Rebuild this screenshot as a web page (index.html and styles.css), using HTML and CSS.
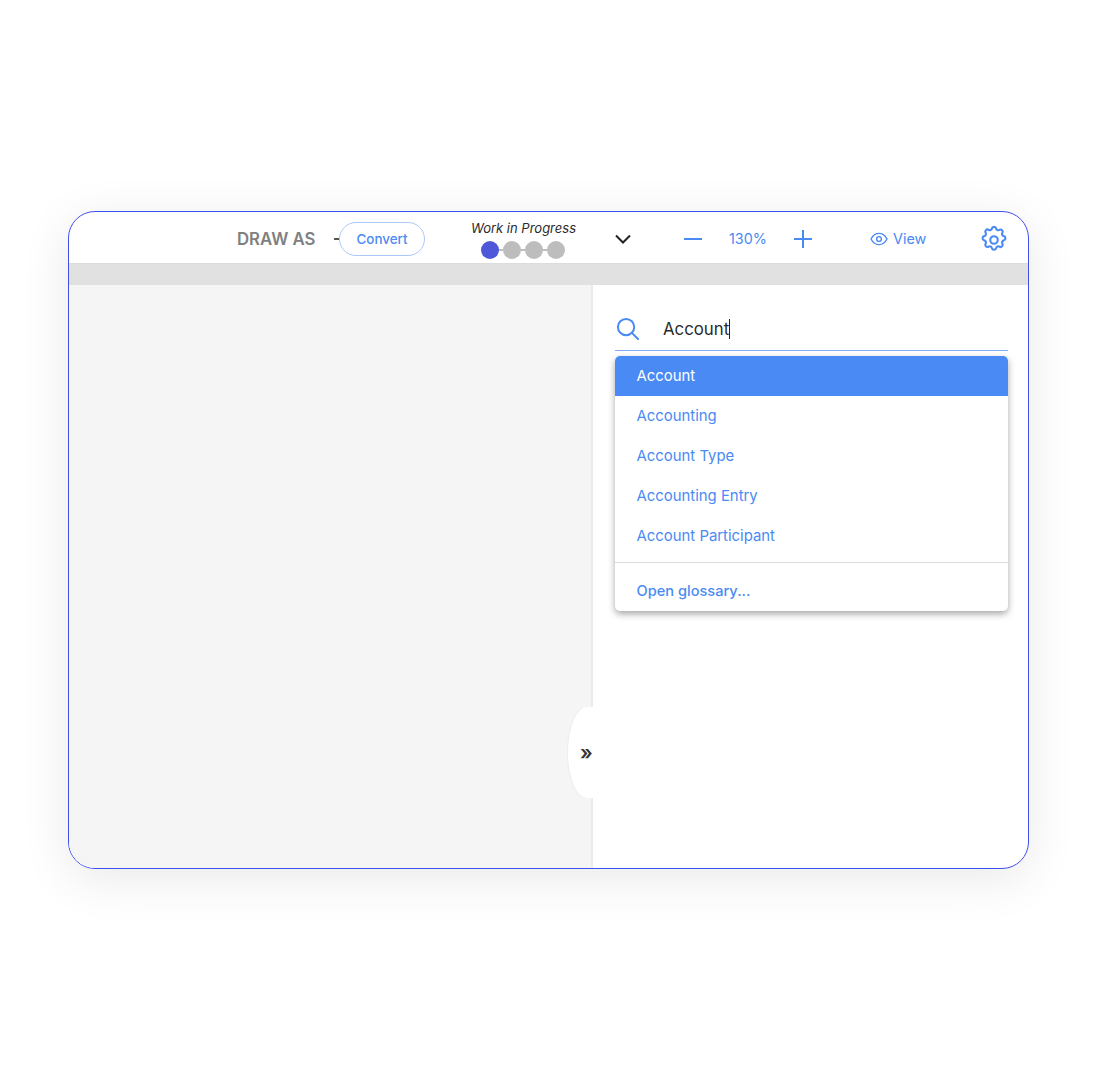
FILE: index.html
```html
<!DOCTYPE html>
<html>
<head>
<meta charset="utf-8" />
<title>Draw as</title>
<link rel="stylesheet" href="styles.css">
</head>
<body>
  <div class="window">
    <div class="toolbar">
      <span class="draw-label">DRAW AS</span>
      <span class="dash"></span>
      <a class="convert">Convert</a>
      <div class="progress">
        <span class="progress-label">Work in Progress</span>
        <div class="steps">
          <span class="step on"></span>
          <span class="link"></span>
          <span class="step"></span>
          <span class="link"></span>
          <span class="step"></span>
          <span class="link"></span>
          <span class="step"></span>
        </div>
      </div>
      <svg class="chevron" width="18" height="10" viewBox="0 0 18 10"><path d="M2 1.5 L9 8.5 L16 1.5" fill="none" stroke="#222" stroke-width="2"/></svg>
      <svg class="minus" width="18" height="18" viewBox="0 0 18 18"><path d="M0 9 H18" stroke="#4a8af4" stroke-width="2"/></svg>
      <span class="zoom">130%</span>
      <svg class="plus" width="18" height="18" viewBox="0 0 18 18"><path d="M0 9 H18 M9 0 V18" stroke="#4a8af4" stroke-width="2"/></svg>
      <svg class="eye" width="18" height="14" viewBox="0 0 18 14"><path d="M1 7 C3 3.2 5.8 1.4 9 1.4 C12.2 1.4 15 3.2 17 7 C15 10.8 12.2 12.6 9 12.6 C5.8 12.6 3 10.8 1 7 Z" fill="none" stroke="#4a8af4" stroke-width="1.4"/><circle cx="9" cy="7" r="2.4" fill="none" stroke="#4a8af4" stroke-width="1.4"/></svg>
      <span class="view">View</span>
      <svg class="gear" width="30" height="30" viewBox="0 0 24 24" fill="none" stroke="#4a8af4" stroke-width="1.7" stroke-linecap="round" stroke-linejoin="round"><path d="M10.3 2.8c.4-1.8 3-1.8 3.4 0a1.7 1.7 0 0 0 2.6 1.1c1.6-1 3.4.8 2.4 2.4a1.7 1.7 0 0 0 1.1 2.6c1.8.4 1.8 3 0 3.4a1.7 1.7 0 0 0-1.1 2.6c1 1.6-.8 3.4-2.4 2.4a1.7 1.7 0 0 0-2.6 1.1c-.4 1.8-3 1.8-3.4 0a1.7 1.7 0 0 0-2.6-1.1c-1.6 1-3.4-.8-2.4-2.4a1.7 1.7 0 0 0-1.1-2.6c-1.8-.4-1.8-3 0-3.4a1.7 1.7 0 0 0 1.1-2.6c-1-1.6.8-3.4 2.4-2.4a1.7 1.7 0 0 0 2.6-1.1z"/><circle cx="12" cy="12" r="3"/></svg>
    </div>
    <div class="band"></div>
    <div class="panes">
      <div class="canvas"></div>
      <div class="side">
        <div class="tab">»</div>
        <div class="search">
          <svg class="search-icon" width="23" height="23" viewBox="0 0 24 24" fill="none" stroke="#4a8af4" stroke-width="2.1" stroke-linecap="round"><circle cx="10.5" cy="10.5" r="8.5"/><path d="M16.8 16.8 L23 23"/></svg>
          <span class="search-text">Account</span><span class="caret"></span>
        </div>
        <div class="menu">
          <div class="item active">Account</div>
          <div class="item">Accounting</div>
          <div class="item">Account Type</div>
          <div class="item">Accounting Entry</div>
          <div class="item">Account Participant</div>
          <div class="divider"></div>
          <div class="item glossary">Open glossary...</div>
        </div>
      </div>
    </div>
  </div>
</body>
</html>
```

FILE: styles.css
```css
body
{
	margin: 0;
	padding: 211px 0 0 68px;
	background: #fff;
	font-family: Inter, "Liberation Sans", sans-serif;
}
.window
{
	box-sizing: border-box;
	width: 961px;
	height: 658px;
	border: 1px solid #3f4ff0;
	border-radius: 27px;
	overflow: hidden;
	display: flex;
	flex-direction: column;
	background: #fff;
}
body::before
{
	content: "";
	position: absolute;
	left: 68px;
	top: 211px;
	width: 961px;
	height: 658px;
	border-radius: 27px;
	box-shadow: 0 10px 50px rgba(0,0,0,.09);
	z-index: -1;
}

.toolbar
{
	height: 52px;
	flex: none;
	display: flex;
	align-items: center;
	padding: 2px 0 0 168px;
	border-bottom: 1px solid #dcdcdc;
	box-sizing: border-box;
}
.draw-label
{
	font-size: 16.8px;
	font-weight: 600;
	color: #808080;
	width: 97px;
	flex: none;
}
.dash
{
	width: 6px;
	height: 2px;
	background: #555;
	flex: none;
	margin-right: -1px;
}
.convert
{
	box-sizing: border-box;
	width: 86px;
	height: 34px;
	flex: none;
	border: 1px solid #a9c8fa;
	border-radius: 17px;
	background: #fff;
	color: #4a8af4;
	font-size: 13.4px;
	font-weight: 500;
	line-height: 32px;
	text-align: center;
}
.progress
{
	width: 106px;
	flex: none;
	margin-left: 46px;
	display: flex;
	flex-direction: column;
	padding-top: 1px;
}
.progress-label
{
	font-size: 13px;
	font-style: italic;
	color: #2b2b2b;
	white-space: nowrap;
	line-height: 16px;
}
.steps
{
	display: flex;
	align-items: center;
	margin: 5px 0 0 10px;
}
.step
{
	width: 18px;
	height: 18px;
	border-radius: 50%;
	background: #bdbdbd;
	flex: none;
}
.step.on
{
	background: #4f58d8;
}
.link
{
	width: 4px;
	height: 2px;
	background: #bdbdbd;
	flex: none;
}
.chevron
{
	flex: none;
	margin-left: 37px;
}
.minus
{
	flex: none;
	margin-left: 52px;
}
.zoom
{
	width: 92px;
	flex: none;
	text-align: center;
	font-size: 14.4px;
	color: #4a8af4;
}
.plus
{
	flex: none;
}
.eye
{
	flex: none;
	margin-left: 58px;
}
.view
{
	flex: none;
	font-size: 14.4px;
	color: #4a8af4;
	margin-left: 5px;
}
.gear
{
	flex: none;
	margin: 2px 0 0 53px;
}

.band
{
	height: 21px;
	flex: none;
	background: #e1e1e1;
}
.panes
{
	flex: 1;
	display: flex;
	min-height: 0;
}
.canvas
{
	width: 522px;
	flex: none;
	background: #f5f5f5;
	border-right: 2px solid #ebebeb;
}
.side
{
	flex: 1;
	position: relative;
	padding: 0 20px 0 22px;
}
.tab
{
	position: absolute;
	left: -25px;
	top: 422px;
	width: 27px;
	height: 91px;
	box-sizing: border-box;
	background: #fff;
	border-radius: 19px 0 0 19px / 46px 0 0 46px;
	box-shadow: -1px 0 1px rgba(0,0,0,.04);
	font-size: 20px;
	font-weight: 600;
	color: #333;
	line-height: 92px;
	padding-left: 12px;
}
.search
{
	height: 66px;
	box-sizing: border-box;
	display: flex;
	align-items: center;
	border-bottom: 1px solid #7fabf7;
	padding: 22px 0 0 1px;
	margin-bottom: 5px;
}
.search-icon
{
	flex: none;
}
.search-text
{
	margin-left: 24px;
	font-size: 16.8px;
	color: #2b2b2b;
}
.caret
{
	width: 1px;
	height: 20px;
	background: #222;
}
.menu
{
	background: #fff;
	border-radius: 5px;
	overflow: hidden;
	box-shadow: 0 3px 7px rgba(0,0,0,.35);
	height: 255px;
}
.item
{
	height: 40px;
	line-height: 41px;
	padding-left: 21.5px;
	font-size: 14.9px;
	color: #4a8af4;
}
.item.active
{
	background: #4a8af4;
	color: #fff;
}
.divider
{
	height: 1px;
	background: #dcdcdc;
	margin: 6px 0 8px;
}
.glossary
{
	font-weight: 500;
	font-size: 14.6px;
}
```
